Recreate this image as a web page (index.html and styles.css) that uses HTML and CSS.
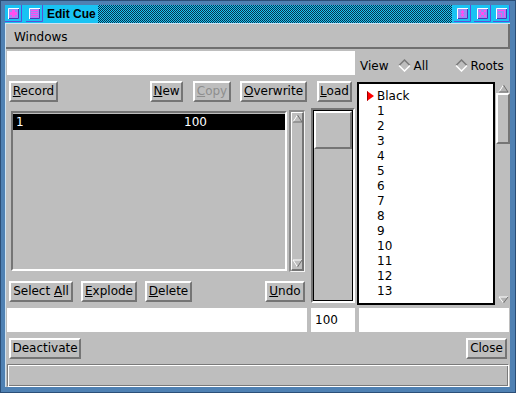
FILE: index.html
```html
<!DOCTYPE html>
<html lang="en">
<head>
    <meta charset="UTF-8">
    <title>Edit Cue</title>
    <link rel="stylesheet" href="styles.css">
</head>
<body>

    <div class="window">
        <!-- Title bar -->
        <div class="titlebar">
            <svg class="tb-icon" width="17" height="17" viewBox="0 0 17 17">
                <rect width="17" height="17" fill="#19c3f3"/>
                <path d="M16.5 0V16.5H0" stroke="#5a4fd8" fill="none"/>
                <rect x="3" y="3" width="11" height="11" fill="#9a8af6"/>
                <path d="M3.5 14V3.5H14" stroke="#fff" fill="none"/>
                <path d="M4 13.5H13.5V4" stroke="#4c36b8" fill="none"/>
                <path d="M7 5h3v2h2v3h-2v2H7v-2H5V7h2z" fill="#ff4ef0"/>
            </svg>
            <svg class="tb-icon second" width="17" height="17" viewBox="0 0 17 17">
                <rect width="17" height="17" fill="#19c3f3"/>
                <path d="M16.5 0V16.5H0" stroke="#5a4fd8" fill="none"/>
                <rect x="3" y="3" width="11" height="11" fill="#9a8af6"/>
                <path d="M3.5 14V3.5H14" stroke="#fff" fill="none"/>
                <path d="M4 13.5H13.5V4" stroke="#4c36b8" fill="none"/>
                <path d="M5 5h7v1H5zM5 7h7v1H5zM5 9h7v1H5zM5 11h7v1H5z" fill="#ff4ef0"/>
            </svg>
            <span class="title">Edit Cue</span>
            <span class="stipple"></span>
            <svg class="tb-icon r1" width="17" height="17" viewBox="0 0 17 17">
                <rect width="17" height="17" fill="#19c3f3"/>
                <path d="M16.5 0V16.5H0" stroke="#5a4fd8" fill="none"/>
                <rect x="3" y="3" width="11" height="11" fill="#9a8af6"/>
                <path d="M3.5 14V3.5H14" stroke="#fff" fill="none"/>
                <path d="M4 13.5H13.5V4" stroke="#4c36b8" fill="none"/>
                <path d="M8 5h1v7H8zM7 6h3v2H7zM7 9h3v2H7z" fill="#ff4ef0"/>
            </svg>
            <svg class="tb-icon r2" width="17" height="17" viewBox="0 0 17 17">
                <rect width="17" height="17" fill="#19c3f3"/>
                <path d="M16.5 0V16.5H0" stroke="#5a4fd8" fill="none"/>
                <rect x="3" y="3" width="11" height="11" fill="#9a8af6"/>
                <path d="M3.5 14V3.5H14" stroke="#fff" fill="none"/>
                <path d="M4 13.5H13.5V4" stroke="#4c36b8" fill="none"/>
                <path d="M5 5h2v2H5zM10 5h2v2h-2zM5 10h2v2H5zM10 10h2v2h-2zM7 7h3v3H7z" fill="#ff4ef0"/>
            </svg>
            <svg class="tb-icon r3" width="17" height="17" viewBox="0 0 17 17">
                <rect width="17" height="17" fill="#19c3f3"/>
                <path d="M16.5 0V16.5H0" stroke="#5a4fd8" fill="none"/>
                <rect x="3" y="3" width="11" height="11" fill="#9a8af6"/>
                <path d="M3.5 14V3.5H14" stroke="#fff" fill="none"/>
                <path d="M4 13.5H13.5V4" stroke="#4c36b8" fill="none"/>
                <path d="M5 5h7v7h-1V6H5zM5 8h4v4H8V9H5z" fill="#ff4ef0"/>
            </svg>
        </div>

        <div class="client">
            <div class="menubar"><span class="menu">Windows</span></div>

            <!-- Command field + view selector -->
            <div class="row-top">
                <div class="field field-cmd"></div>
                <div class="view">
                    <span class="view-label">View</span>
                    <span class="radio radio-all">
                        <svg width="13" height="13" viewBox="0 0 13 13">
                            <path d="M1 6.5L6.5 1L12 6.5" stroke="#7a7a7a" stroke-width="1.5" fill="none"/>
                            <path d="M1 6.5L6.5 12L12 6.5" stroke="#fff" stroke-width="1.5" fill="none"/>
                        </svg>All</span>
                    <span class="radio radio-roots">
                        <svg width="13" height="13" viewBox="0 0 13 13">
                            <path d="M1 6.5L6.5 1L12 6.5" stroke="#7a7a7a" stroke-width="1.5" fill="none"/>
                            <path d="M1 6.5L6.5 12L12 6.5" stroke="#fff" stroke-width="1.5" fill="none"/>
                        </svg>Roots</span>
                </div>
            </div>

            <div class="body">
                <!-- Cue list -->
                <div class="col-left">
                    <div class="btn-row">
                        <button class="btn btn-record"><u>R</u>ecord</button>
                        <button class="btn btn-new"><u>N</u>ew</button>
                        <button class="btn btn-copy"><u>C</u>opy</button>
                        <button class="btn btn-overwrite"><u>O</u>verwrite</button>
                    </div>
                    <div class="list-wrap">
                        <div class="cue-list">
                            <div class="cue-row selected"><span class="c-num">1</span><span class="c-val">100</span></div>
                        </div>
                        <div class="vscroll">
                            <div class="thumb-full">
                                <svg width="11" height="9" viewBox="0 0 11 9">
                                    <path d="M5.5 1L10 8H1z" fill="#bebebe"/>
                                    <path d="M1 8L5.5 1" stroke="#fff" fill="none"/>
                                    <path d="M5.5 1L10 8H1" stroke="#6f6f6f" fill="none"/>
                                </svg>
                                <svg width="11" height="9" viewBox="0 0 11 9">
                                    <path d="M1 1H10L5.5 8z" fill="#bebebe"/>
                                    <path d="M1 1H10M1 1L5.5 8" stroke="#fff" fill="none"/>
                                    <path d="M10 1L5.5 8" stroke="#6f6f6f" fill="none"/>
                                </svg>
                            </div>
                        </div>
                    </div>
                    <div class="btn-row btn-row-bottom">
                        <button class="btn btn-selectall">Select <u>A</u>ll</button>
                        <button class="btn btn-explode"><u>E</u>xplode</button>
                        <button class="btn btn-delete"><u>D</u>elete</button>
                        <button class="btn btn-undo"><u>U</u>ndo</button>
                    </div>
                </div>

                <!-- Level slider -->
                <div class="col-mid">
                    <button class="btn btn-load"><u>L</u>oad</button>
                    <div class="slider">
                        <div class="slider-inner">
                            <div class="slider-thumb"></div>
                        </div>
                    </div>
                </div>

                <!-- Group list -->
                <div class="col-right">
                    <div class="group-list">
                        <div class="grp-item current">
                            <svg class="marker" width="7" height="10" viewBox="0 0 7 10">
                                <path d="M0 0L7 5L0 10z" fill="#f00"/>
                                <path d="M0.5 0.5V9.5" stroke="#900"/>
                            </svg>Black
                        </div>
                        <div class="grp-item">1</div>
                        <div class="grp-item">2</div>
                        <div class="grp-item">3</div>
                        <div class="grp-item">4</div>
                        <div class="grp-item">5</div>
                        <div class="grp-item">6</div>
                        <div class="grp-item">7</div>
                        <div class="grp-item">8</div>
                        <div class="grp-item">9</div>
                        <div class="grp-item">10</div>
                        <div class="grp-item">11</div>
                        <div class="grp-item">12</div>
                        <div class="grp-item">13</div>
                    </div>
                    <div class="vscroll-r">
                        <svg class="arrow-up" width="11" height="9" viewBox="0 0 11 9">
                            <path d="M5.5 1L10 8H1z" fill="#b4b4b4"/>
                            <path d="M1 8L5.5 1" stroke="#fff" fill="none"/>
                            <path d="M5.5 1L10 8H1" stroke="#6f6f6f" fill="none"/>
                        </svg>
                        <div class="thumb-r"></div>
                        <svg class="arrow-down" width="11" height="8" viewBox="0 0 11 8">
                            <path d="M1 1H10L5.5 7z" fill="#b4b4b4"/>
                            <path d="M1 1H10M1 1L5.5 7" stroke="#fff" fill="none"/>
                            <path d="M10 1L5.5 7" stroke="#6f6f6f" fill="none"/>
                        </svg>
                    </div>
                </div>
            </div>

            <div class="row-fields">
                <div class="field field-name"></div>
                <div class="field field-level">100</div>
                <div class="field field-group"></div>
            </div>

            <div class="row-actions">
                <button class="btn btn-deactivate">Deactivate</button>
                <button class="btn btn-close">Close</button>
            </div>

            <div class="status"></div>
        </div>
    </div>

</body>
</html>
```

FILE: styles.css
```css
body {
    margin: 0;
    background: #2b4f78;
    font-family: "DejaVu Sans", sans-serif;
    font-size: 12px;
    color: #000;
}
.window {
    width: 516px;
    height: 393px;
    box-sizing: border-box;
    background: #4f81b3;
    border: 1px solid #2b4f78;
    padding: 4px 5px 5px 4px;
    display: flex;
    flex-direction: column;
}

/* title bar */
.titlebar {
    height: 18px;
    flex: none;
    display: flex;
    background: #19c3f3;
}
.tb-icon {
    display: block;
    flex: none;
}
.tb-icon.second {
    margin-left: 4px;
}
.title {
    margin-left: 2px;
    padding: 0 2px;
    font-family: "Liberation Sans", sans-serif;
    font-weight: bold;
    font-size: 12px;
    line-height: 19px;
}
.stipple {
    flex: 1;
    background: repeating-conic-gradient(#0b3048 0 25%, #19c3f3 0 50%) 0 0 / 2px 2px;
}
.tb-icon.r1 {
    margin-left: 2px;
}
.tb-icon.r2 {
    margin-left: 3px;
}
.tb-icon.r3 {
    margin-left: 2px;
}

/* client area */
.client {
    flex: 1;
    background: #bebebe;
    border-top: 1px solid #cde3f3;
    border-left: 1px solid #cde3f3;
    display: flex;
    flex-direction: column;
}
.menubar {
    height: 25px;
    flex: none;
    box-sizing: border-box;
    border-bottom: 2px solid #6f6f6f;
    border-right: 2px solid #6f6f6f;
    padding: 3px 0 0 8px;
    line-height: 20px;
}
.field {
    background: #fff;
    height: 24px;
    box-sizing: border-box;
}
.row-top {
    margin-top: 2px;
    height: 24px;
    display: flex;
}
.field-cmd {
    margin-left: 1px;
    width: 348px;
}
.view {
    display: flex;
    align-items: center;
    height: 24px;
    box-sizing: border-box;
    padding-top: 5px;
    margin-left: 5px;
}
.radio {
    display: flex;
    align-items: center;
}
.radio svg {
    margin-right: 2px;
}
.radio-all {
    margin-left: 10px;
}
.radio-roots {
    margin-left: 27px;
}

/* buttons */
.btn {
    box-sizing: border-box;
    height: 21px;
    padding: 0;
    border: 2px solid;
    border-color: #fff #757575 #757575 #fff;
    background: #bebebe;
    font: inherit;
    line-height: 17px;
    color: #000;
    text-align: center;
}
.btn-row {
    display: flex;
    height: 21px;
}
.btn-record {
    margin-left: 3px;
    width: 49px;
}
.btn-new {
    margin-left: auto;
    width: 33px;
}
.btn-copy {
    margin-left: 10px;
    width: 38px;
    color: #8e8e8e;
}
.btn-overwrite {
    margin-left: 9px;
    margin-right: 1px;
    width: 67px;
}
.btn-row-bottom {
    margin-top: 9px;
}
.btn-selectall {
    margin-left: 3px;
    width: 64px;
}
.btn-explode {
    margin-left: 8px;
    width: 56px;
}
.btn-delete {
    margin-left: 8px;
    width: 47px;
}
.btn-undo {
    margin-left: auto;
    margin-right: 3px;
    width: 40px;
}

/* main area */
.body {
    margin-top: 6px;
    height: 224px;
    display: flex;
}
.col-left {
    width: 302px;
    display: flex;
    flex-direction: column;
}
.list-wrap {
    display: flex;
    margin-top: 8px;
    height: 162px;
}
.cue-list {
    margin: 1px 0 0 5px;
    width: 276px;
    height: 160px;
    box-sizing: border-box;
    border: 2px solid;
    border-color: #757575 #fff #fff #757575;
    padding-top: 1px;
}
.cue-row {
    display: flex;
    height: 16px;
    line-height: 16px;
}
.cue-row.selected {
    background: #000;
    color: #fff;
}
.c-num {
    width: 171px;
    box-sizing: border-box;
    padding-left: 3px;
}
.vscroll {
    margin-left: 2px;
    width: 16px;
    height: 162px;
    box-sizing: border-box;
    border-style: solid;
    border-width: 2px 1px 1px 2px;
    border-color: #8a8a8a #f4f4f4 #f4f4f4 #8a8a8a;
}
.thumb-full {
    height: 100%;
    box-sizing: border-box;
    border-style: solid;
    border-width: 1px 2px 2px 1px;
    border-color: #fff #757575 #757575 #fff;
    display: flex;
    flex-direction: column;
    justify-content: space-between;
    align-items: center;
    padding: 1px 0;
}
.col-mid {
    width: 48px;
    display: flex;
    flex-direction: column;
}
.btn-load {
    margin-left: 9px;
    width: 35px;
}
.slider {
    margin: 6px 0 0 3px;
    width: 44px;
    height: 195px;
    box-sizing: border-box;
    border: 2px solid;
    border-color: #757575 #fff #fff #757575;
}
.slider-inner {
    height: 100%;
    box-sizing: border-box;
    border: 1px solid #000;
}
.slider-thumb {
    height: 38px;
    box-sizing: border-box;
    border: 2px solid;
    border-color: #fff #757575 #757575 #fff;
}
.col-right {
    width: 154px;
    display: flex;
}
.group-list {
    margin: 1px 0 0 1px;
    width: 138px;
    height: 223px;
    box-sizing: border-box;
    border: 2px solid #000;
    background: #fff;
    padding-top: 4px;
}
.grp-item {
    height: 15px;
    line-height: 15px;
    padding-left: 18px;
}
.grp-item.current {
    height: 16px;
    line-height: 16px;
    padding-left: 8px;
    display: flex;
    align-items: center;
}
.marker {
    margin-right: 3px;
}
.vscroll-r {
    margin: 1px 0 0 1px;
    width: 14px;
    height: 223px;
    box-sizing: border-box;
    display: flex;
    flex-direction: column;
    align-items: center;
    padding-top: 2px;
}
.arrow-up {
    display: block;
}
.thumb-r {
    width: 14px;
    height: 51px;
    box-sizing: border-box;
    border: 2px solid;
    border-color: #fff #757575 #757575 #fff;
}
.arrow-down {
    display: block;
    margin-top: auto;
    margin-bottom: 1px;
}

/* lower rows */
.row-fields {
    margin-top: 3px;
    height: 24px;
    display: flex;
}
.field-name {
    margin-left: 1px;
    width: 300px;
}
.field-level {
    margin-left: 4px;
    width: 44px;
    padding-left: 4px;
    line-height: 24px;
}
.field-group {
    margin-left: 4px;
    width: 150px;
}
.row-actions {
    margin-top: 6px;
    height: 21px;
    display: flex;
}
.btn-deactivate {
    margin-left: 3px;
    width: 72px;
}
.btn-close {
    margin-left: auto;
    margin-right: 3px;
    width: 41px;
}
.status {
    margin: 5px 1px 0 1px;
    height: 23px;
    box-sizing: border-box;
    border: 1px solid;
    border-color: #7a7a7a #fff #fff #7a7a7a;
    box-shadow: inset 1px 1px 0 #fff, inset -1px -1px 0 #7a7a7a;
}
```
